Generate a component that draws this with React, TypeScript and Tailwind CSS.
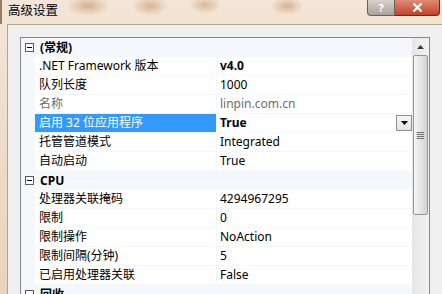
import React from 'react'

type Row = {
  cat?: string
  name?: string
  value?: string
  bold?: boolean
  disabled?: boolean
  selected?: boolean
}

const rows: Row[] = [
  { cat: '(常规)' },
  { name: '.NET Framework 版本', value: 'v4.0', bold: true },
  { name: '队列长度', value: '1000' },
  { name: '名称', value: 'linpin.com.cn', disabled: true },
  { name: '启用 32 位应用程序', value: 'True', bold: true, selected: true },
  { name: '托管管道模式', value: 'Integrated' },
  { name: '自动启动', value: 'True' },
  { cat: 'CPU' },
  { name: '处理器关联掩码', value: '4294967295' },
  { name: '限制', value: '0' },
  { name: '限制操作', value: 'NoAction' },
  { name: '限制间隔(分钟)', value: '5' },
  { name: '已启用处理器关联', value: 'False' },
  { cat: '回收' },
]

function Expander() {
  return (
    <svg width="9" height="9" viewBox="0 0 9 9" className="block">
      <rect x="0.5" y="0.5" width="8" height="8" fill="#fff" stroke="#5a5a5a" />
      <path d="M2 4.5h5" stroke="#000" strokeWidth="1" />
    </svg>
  )
}

function CategoryRow({ label }: { label: string }) {
  return (
    <div className="flex h-[19px] shrink-0 items-center bg-[#f4f7fc]">
      <div className="flex w-[14px] justify-center pl-[2px]">
        <Expander />
      </div>
      <span className="pl-[5px] font-bold leading-[19px] text-black">{label}</span>
    </div>
  )
}

function PropRow({ row }: { row: Row }) {
  return (
    <div className="flex h-[19px] shrink-0 border-b border-[#f4f7fc] bg-white">
      <div className="w-[14px] bg-[#f4f7fc]" />
      <div
        className={
          row.selected
            ? 'w-[181px] truncate bg-[#3399ff] pl-[4px] leading-[18px] text-white'
            : row.disabled
              ? 'w-[181px] truncate pl-[4px] leading-[18px] text-[#6d6d6d]'
              : 'w-[181px] truncate pl-[4px] leading-[18px] text-black'
        }
      >
        {row.name}
      </div>
      <div className="w-px bg-[#f4f7fc]" />
      <div className="flex flex-1 items-center justify-between pl-[3px]">
        <span
          className={
            (row.bold ? 'font-bold ' : '') +
            (row.disabled ? 'text-[#6d6d6d] ' : 'text-black ') +
            'leading-[18px]'
          }
        >
          {row.value}
        </span>
        {row.selected && (
          <div className="flex h-[16px] w-[16px] items-center justify-center border border-[#8e8f8f] bg-gradient-to-b from-[#f6f6f6] to-[#e3e3e3]">
            <svg width="7" height="4" viewBox="0 0 7 4">
              <path d="M0 0h7L3.5 4z" fill="#000" />
            </svg>
          </div>
        )}
      </div>
    </div>
  )
}

function ScrollBar() {
  return (
    <div className="flex w-[17px] flex-col bg-gradient-to-r from-[#e6e6e6] to-[#f2f2f2]">
      <div className="flex h-[17px] items-center justify-center">
        <svg width="7" height="4" viewBox="0 0 7 4">
          <path d="M3.5 0L7 4H0z" fill="#3c3c3c" />
        </svg>
      </div>
      <div className="mx-[1px] flex h-[160px] items-center justify-center rounded-[2px] border border-[#979797] bg-gradient-to-r from-[#f4f4f4] via-[#e6e6e6] to-[#d2d2d2]">
        <div className="flex flex-col gap-[1px]">
          <div className="h-px w-[7px] bg-[#6f6f6f]" />
          <div className="h-px w-[7px] bg-[#6f6f6f]" />
          <div className="h-px w-[7px] bg-[#6f6f6f]" />
          <div className="h-px w-[7px] bg-[#6f6f6f]" />
        </div>
      </div>
      <div className="flex-1" />
    </div>
  )
}

export default function App() {
  return (
    <div
      className="flex h-[294px] w-[442px] flex-col overflow-hidden bg-[radial-gradient(ellipse_22px_10px_at_88px_6px,#d3b191,transparent),radial-gradient(ellipse_18px_10px_at_150px_6px,#d6b596,transparent),radial-gradient(ellipse_16px_9px_at_205px_5px,#d8b89a,transparent),radial-gradient(ellipse_16px_9px_at_287px_6px,#d4b292,transparent),linear-gradient(#f3e5d7,#ead3bc)] text-[12px] text-black"
      style={{ fontFamily: '"Noto Sans", "Noto Sans CJK SC", sans-serif' }}
    >
      <div className="flex h-[24px] shrink-0 items-start justify-between border-l-2 border-[#9c7c60]">
        <span className="pl-[6px] pt-[2px] text-[12.5px] leading-[17px] text-black">高级设置</span>
        <div className="mr-[2px] flex">
          <div className="flex h-[16px] w-[28px] items-center justify-center rounded-bl-[4px] border border-t-0 border-[#6a5f58] bg-gradient-to-b from-[#d9d2cc] to-[#a9a19c] text-[11px] font-bold leading-none text-white">
            ?
          </div>
          <div className="flex h-[16px] w-[45px] items-center justify-center rounded-br-[4px] border border-l-0 border-t-0 border-[#6b2a20] bg-gradient-to-b from-[#e08a74] to-[#c23f2b]">
            <svg width="11" height="9" viewBox="0 0 11 9">
              <path d="M1.5 0.5L9.5 8.5M9.5 0.5L1.5 8.5" stroke="#fff" strokeWidth="2.2" />
            </svg>
          </div>
        </div>
      </div>
      <div className="ml-[7px] flex flex-1 flex-col border-l border-t border-[#b3a393] bg-[#f0f0f0] pl-[12px] pt-[12px]">
        <div className="flex w-[410px] flex-1 border border-[#828790] border-b-0 bg-white">
          <div className="flex w-[391px] flex-col overflow-hidden">
            {rows.map((r, i) =>
              r.cat ? <CategoryRow key={i} label={r.cat} /> : <PropRow key={i} row={r} />
            )}
          </div>
          <ScrollBar />
        </div>
      </div>
    </div>
  )
}
